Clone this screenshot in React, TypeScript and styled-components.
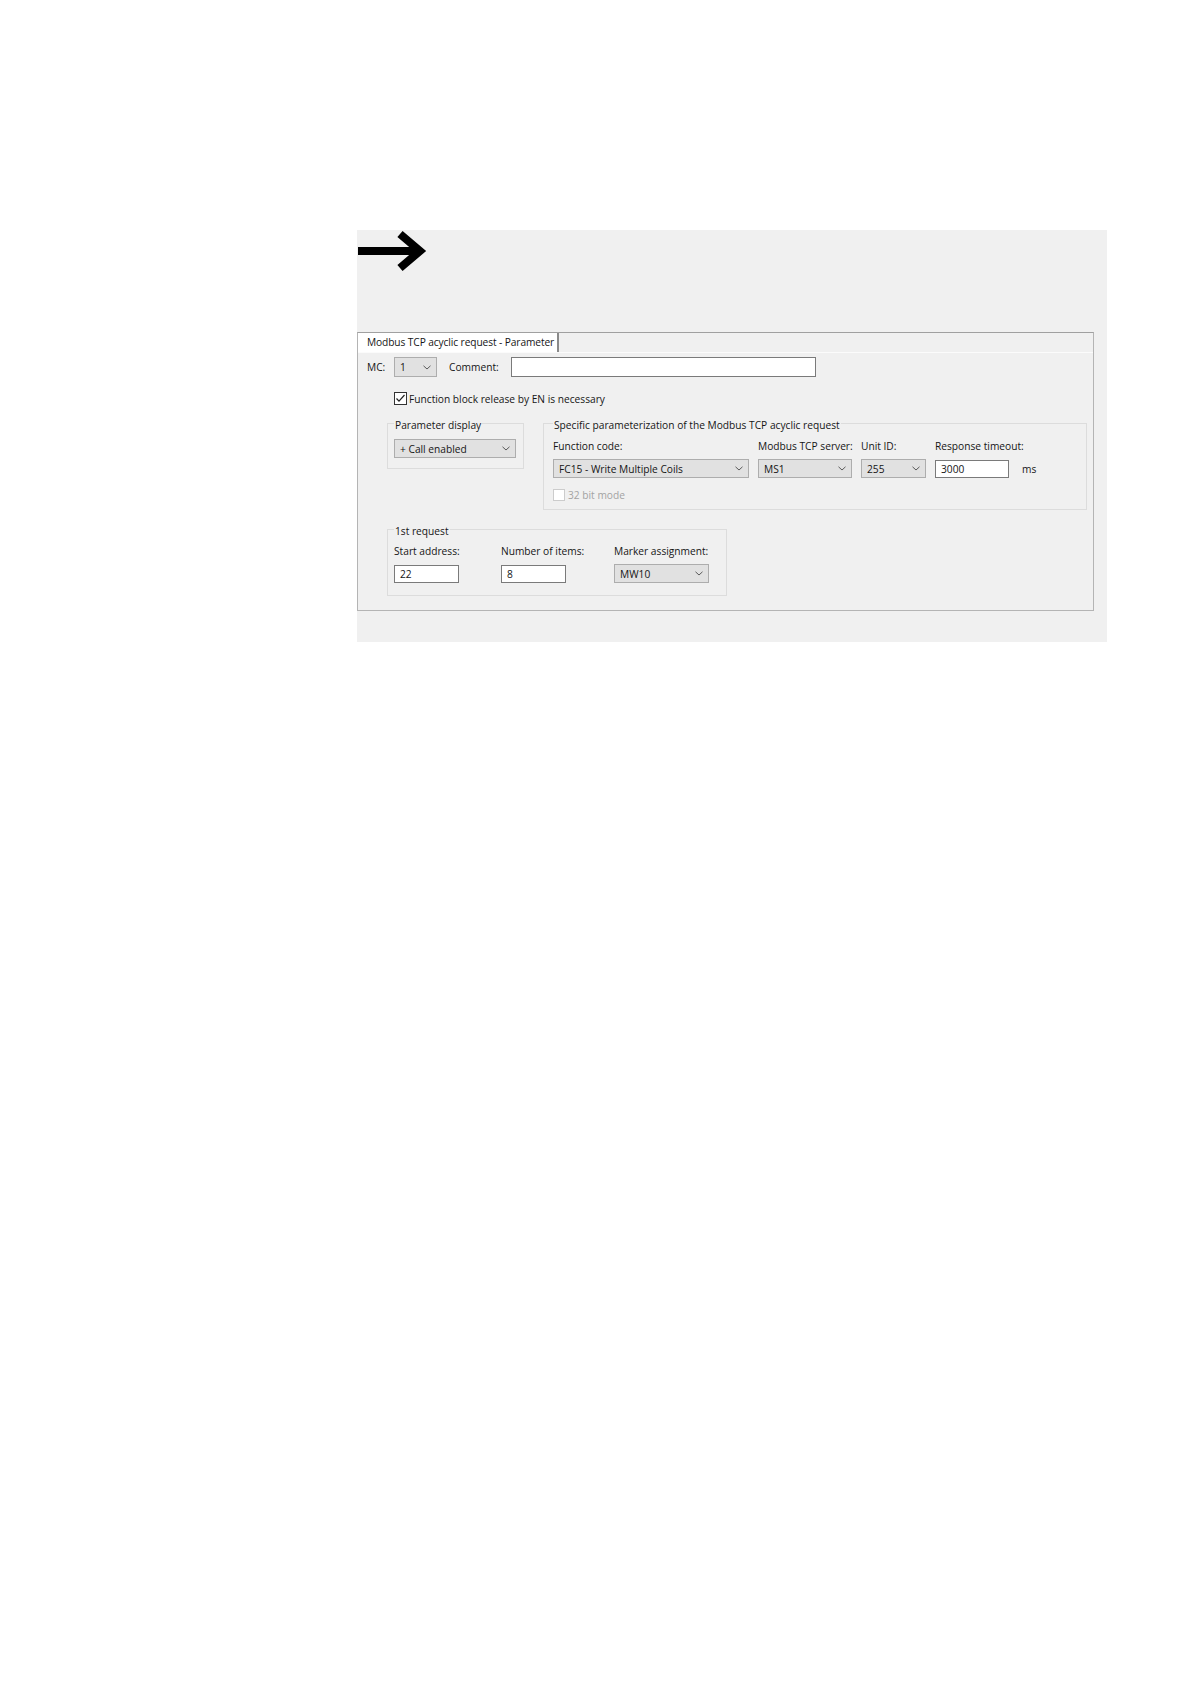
import styled, { createGlobalStyle } from "styled-components";

const GlobalStyle = createGlobalStyle`
  * {
    box-sizing: border-box;
  }
  body {
    margin: 0;
    background: #ffffff;
    font-family: "Open Sans", "Noto Sans", sans-serif;
    font-size: 10.2px;
    color: #151515;
  }
`;

const Page = styled.div`
  min-height: 1684px;
  padding: 230px 0 0 357px;
`;

const Sheet = styled.div`
  width: 750px;
  background: #f0f0f0;
  padding-bottom: 31px;
`;

const ArrowRow = styled.div`
  height: 102px;

  svg {
    display: block;
  }
`;

const TabFrame = styled.div`
  width: 737px;
  border: 1px solid #b4b4b4;
  border-top-color: #a0a0a0;
`;

const TabStrip = styled.div`
  display: flex;
  height: 20px;
  border-bottom: 1px solid #fbfbfb;
`;

const Tab = styled.div`
  background: #ffffff;
  border-right: 2px solid #8a8a8a;
  padding: 0 3px 0 9px;
  line-height: 18px;
  letter-spacing: -0.1px;
  white-space: nowrap;
`;

const TabBody = styled.div`
  display: flex;
  flex-direction: column;
  align-items: flex-start;
  padding: 4px 0 14px 9px;
`;

const McRow = styled.div`
  display: flex;
  align-items: center;
  height: 20px;
`;

const FieldLabel = styled.span<{ $width: number }>`
  width: ${(p) => p.$width}px;
  line-height: 12px;
  white-space: nowrap;
`;

const Combo = styled.div<{ $width: number; $height?: number }>`
  display: flex;
  align-items: center;
  justify-content: space-between;
  width: ${(p) => p.$width}px;
  height: ${(p) => p.$height ?? 19}px;
  padding: 0 5px 0 5px;
  background: #e1e1e1;
  border: 1px solid #adadad;
  white-space: nowrap;

  svg {
    flex: none;
  }
`;

const TextBox = styled.div<{ $width: number; $height?: number }>`
  display: flex;
  align-items: center;
  width: ${(p) => p.$width}px;
  height: ${(p) => p.$height ?? 18}px;
  padding: 0 5px;
  background: #ffffff;
  border: 1px solid #7a7a7a;
`;

const CheckRow = styled.div<{ $indent: number; $top: number; $disabled?: boolean }>`
  display: flex;
  align-items: center;
  gap: ${(p) => (p.$disabled ? 3 : 2)}px;
  margin: ${(p) => p.$top}px 0 0 ${(p) => p.$indent}px;
  line-height: 12px;
  color: ${(p) => (p.$disabled ? "#a3a3a3" : "inherit")};
`;

const Box = styled.span<{ $size: number; $disabled?: boolean }>`
  display: flex;
  align-items: center;
  justify-content: center;
  width: ${(p) => p.$size}px;
  height: ${(p) => p.$size}px;
  background: #ffffff;
  border: 1px solid ${(p) => (p.$disabled ? "#cccccc" : "#333333")};
`;

const GroupsRow = styled.div`
  display: flex;
  align-items: flex-start;
  gap: 19px;
  margin: 10px 0 0 20px;
`;

const Group = styled.fieldset<{ $width: number; $padding: string; $top?: number; $left?: number }>`
  width: ${(p) => p.$width}px;
  min-width: 0;
  margin: ${(p) => p.$top ?? 0}px 0 0 ${(p) => p.$left ?? 0}px;
  padding: ${(p) => p.$padding};
  border: 1px solid #dcdcdc;
`;

const Legend = styled.legend`
  padding: 4px 1px 0;
  line-height: 12px;
  white-space: nowrap;
`;

const FieldGrid = styled.div<{ $columns: string }>`
  display: grid;
  grid-template-columns: ${(p) => p.$columns};
  grid-template-rows: 12px 19px;
  row-gap: 7px;
  align-items: center;
`;

const Unit = styled.span`
  padding-left: 4px;
`;

function Chevron() {
  return (
    <svg width="8" height="5" viewBox="0 0 8 5">
      <polyline points="0.5,0.8 4,4 7.5,0.8" fill="none" stroke="#5a5a5a" strokeWidth="1" />
    </svg>
  );
}

function Check() {
  return (
    <svg width="11" height="11" viewBox="0 0 11 11">
      <polyline points="1.5,5.5 4,8.2 9.5,2" fill="none" stroke="#222222" strokeWidth="1.2" />
    </svg>
  );
}

function ArrowIcon() {
  return (
    <svg width="72" height="44" viewBox="0 0 72 44">
      <line x1="1" y1="21" x2="60" y2="21" stroke="#000000" strokeWidth="8" />
      <polyline
        points="43,4 63,21 43,38"
        fill="none"
        stroke="#000000"
        strokeWidth="8"
        strokeLinejoin="miter"
      />
    </svg>
  );
}

function App() {
  return (
    <Page>
      <GlobalStyle />
      <Sheet>
        <ArrowRow>
          <ArrowIcon />
        </ArrowRow>
        <TabFrame>
          <TabStrip>
            <Tab>Modbus TCP acyclic request - Parameter</Tab>
          </TabStrip>
          <TabBody>
            <McRow>
              <FieldLabel $width={27}>MC:</FieldLabel>
              <Combo $width={43} $height={20}>
                <span>1</span>
                <Chevron />
              </Combo>
              <FieldLabel $width={74} style={{ paddingLeft: 12 }}>
                Comment:
              </FieldLabel>
              <TextBox $width={305} $height={20} />
            </McRow>

            <CheckRow $indent={27} $top={15}>
              <Box $size={13}>
                <Check />
              </Box>
              <span>Function block release by EN is necessary</span>
            </CheckRow>

            <GroupsRow>
              <Group $width={137} $padding="8px 0 10px 6px">
                <Legend>Parameter display</Legend>
                <Combo $width={122}>
                  <span>+ Call enabled</span>
                  <Chevron />
                </Combo>
              </Group>

              <Group $width={544} $padding="9px 0 8px 9px">
                <Legend>Specific parameterization of the Modbus TCP acyclic request</Legend>
                <FieldGrid $columns="205px 103px 74px 83px auto">
                  <FieldLabel $width={196}>Function code:</FieldLabel>
                  <FieldLabel $width={94}>Modbus TCP server:</FieldLabel>
                  <FieldLabel $width={65}>Unit ID:</FieldLabel>
                  <FieldLabel $width={74}>Response timeout:</FieldLabel>
                  <span />
                  <Combo $width={196}>
                    <span>FC15 - Write Multiple Coils</span>
                    <Chevron />
                  </Combo>
                  <Combo $width={94}>
                    <span>MS1</span>
                    <Chevron />
                  </Combo>
                  <Combo $width={65}>
                    <span>255</span>
                    <Chevron />
                  </Combo>
                  <TextBox $width={74}>3000</TextBox>
                  <Unit>ms</Unit>
                </FieldGrid>
                <CheckRow $indent={0} $top={11} $disabled>
                  <Box $size={12} $disabled />
                  <span>32 bit mode</span>
                </CheckRow>
              </Group>
            </GroupsRow>

            <Group $width={340} $padding="8px 0 12px 6px" $top={11} $left={20}>
              <Legend>1st request</Legend>
              <FieldGrid $columns="107px 113px 95px">
                <FieldLabel $width={65}>Start address:</FieldLabel>
                <FieldLabel $width={65}>Number of items:</FieldLabel>
                <FieldLabel $width={95}>Marker assignment:</FieldLabel>
                <TextBox $width={65}>22</TextBox>
                <TextBox $width={65}>8</TextBox>
                <Combo $width={95}>
                  <span>MW10</span>
                  <Chevron />
                </Combo>
              </FieldGrid>
            </Group>
          </TabBody>
        </TabFrame>
      </Sheet>
    </Page>
  );
}

export default App;
